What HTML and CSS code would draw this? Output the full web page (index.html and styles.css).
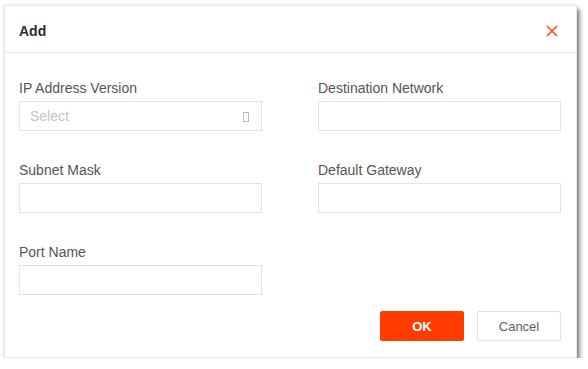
FILE: index.html
```html
<!DOCTYPE html>
<html lang="en">
<head>
    <meta charset="UTF-8">
    <title>Add Route</title>
    <link rel="stylesheet" href="styles.css">
</head>
<body>
    <!-- Add route dialog -->
    <div class="dialog">
        <div class="dialog-header">
            <span class="dialog-title">Add</span>
            <button class="close-button" aria-label="Close">
                <svg width="12" height="12" viewBox="0 0 12 12">
                    <path d="M1 1 L11 11 M11 1 L1 11" stroke="#ff4a26" stroke-width="1.6" fill="none"/>
                </svg>
            </button>
        </div>

        <div class="dialog-body">
            <div class="form-grid">
                <div class="field">
                    <label>IP Address Version</label>
                    <div class="input select">
                        <span class="placeholder">Select</span>
                        <span class="caret"></span>
                    </div>
                </div>
                <div class="field">
                    <label>Destination Network</label>
                    <div class="input"></div>
                </div>
                <div class="field">
                    <label>Subnet Mask</label>
                    <div class="input"></div>
                </div>
                <div class="field">
                    <label>Default Gateway</label>
                    <div class="input"></div>
                </div>
                <div class="field">
                    <label>Port Name</label>
                    <div class="input"></div>
                </div>
            </div>

            <div class="dialog-footer">
                <button class="button button-primary">OK</button>
                <button class="button">Cancel</button>
            </div>
        </div>
    </div>
</body>
</html>
```

FILE: styles.css
```css
:root {
    --text-primary: #333333;
    --text-label: #555555;
    --text-muted: #c4c4c4;
    --border-color: #e3e3e3;
    --accent: #ff3d00;
    --font-primary: 'Liberation Sans', Arial, sans-serif;
}

body {
    margin: 0;
    padding: 5px 0 0 4px;
    font-family: var(--font-primary);
    background-color: #ffffff;
    color: var(--text-primary);
}

.dialog {
    width: 571px;
    background-color: #ffffff;
    border: 1px solid #e8e8e8;
    box-shadow: 0 0 3px rgba(0, 0, 0, 0.12), 3px 4px 4px rgba(0, 0, 0, 0.45);
}

.dialog-header {
    display: flex;
    align-items: center;
    justify-content: space-between;
    height: 47px;
    padding: 4px 18px 0 14px;
    box-sizing: border-box;
    border-bottom: 1px solid #ececec;
}

.dialog-title {
    font-size: 14px;
    font-weight: bold;
    color: #2b2b2b;
}

.close-button {
    padding: 0;
    border: none;
    background: none;
    display: flex;
    cursor: pointer;
}

.dialog-body {
    padding: 27px 15px 16px 14px;
}

.form-grid {
    display: grid;
    grid-template-columns: 243px 243px;
    column-gap: 56px;
    row-gap: 31px;
}

.field label {
    display: block;
    font-size: 14px;
    line-height: 17px;
    color: var(--text-label);
    margin-bottom: 4px;
}

.input {
    height: 30px;
    box-sizing: border-box;
    border: 1px solid var(--border-color);
    background-color: #ffffff;
}

.select {
    display: flex;
    align-items: center;
    justify-content: space-between;
    padding: 0 12px 0 10px;
}

.placeholder {
    font-size: 14px;
    color: var(--text-muted);
}

.caret {
    width: 4px;
    height: 8px;
    margin-top: 2px;
    border: 1px solid #b8b8b8;
}

.dialog-footer {
    display: flex;
    justify-content: flex-end;
    gap: 13px;
    margin-top: 16px;
}

.button {
    width: 84px;
    height: 30px;
    font-size: 13px;
    font-family: var(--font-primary);
    color: #606060;
    background-color: #ffffff;
    border: 1px solid #e0e0e0;
    border-radius: 2px;
    cursor: pointer;
}

.button-primary {
    color: #ffffff;
    font-weight: bold;
    background-color: var(--accent);
    border-color: var(--accent);
}
```
